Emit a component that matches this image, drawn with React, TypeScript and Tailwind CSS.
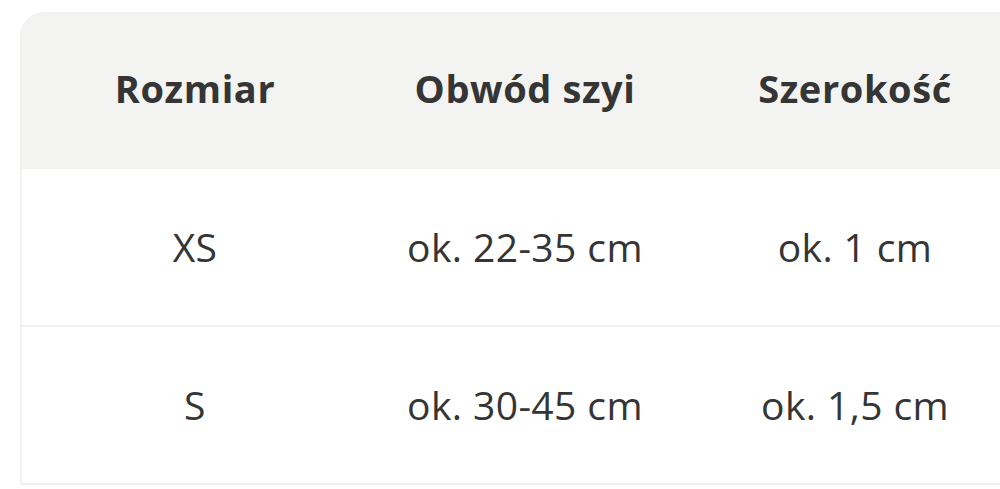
const rows = [
  { size: 'XS', neck: 'ok. 22-35 cm', width: 'ok. 1 cm' },
  { size: 'S', neck: 'ok. 30-45 cm', width: 'ok. 1,5 cm' },
];

export default function App() {
  return (
    <div className="w-[1000px] h-[489px] overflow-hidden bg-white pt-[12px] pl-[20px]" style={{ fontFamily: '"Open Sans", Lato, sans-serif' }}>
      <div className="w-[1000px] rounded-tl-[24px] border-l-2 border-[#f1f2f0] text-[#353535]">
        {/* header */}
        <div className="grid grid-cols-[330px_330px_330px] pl-[8px] h-[157px] bg-[#f3f4f2] rounded-tl-[22px] items-center pb-[4px]">
          <div className="text-center text-[38px] font-bold tracking-[0.6px]">Rozmiar</div>
          <div className="text-center text-[38px] font-bold tracking-[0.6px]">Obwód szyi</div>
          <div className="text-center text-[38px] font-bold tracking-[0.6px]">Szerokość</div>
        </div>
        {rows.map((r) => (
          <div key={r.size} className="grid grid-cols-[330px_330px_330px] pl-[8px] h-[158px] border-b-2 border-[#f0f0f0] items-center">
            <div className="text-center text-[39px] tracking-[0.4px]">{r.size}</div>
            <div className="text-center text-[39px] tracking-[0.4px]">{r.neck}</div>
            <div className="text-center text-[39px] tracking-[0.4px]">{r.width}</div>
          </div>
        ))}
      </div>
    </div>
  );
}
